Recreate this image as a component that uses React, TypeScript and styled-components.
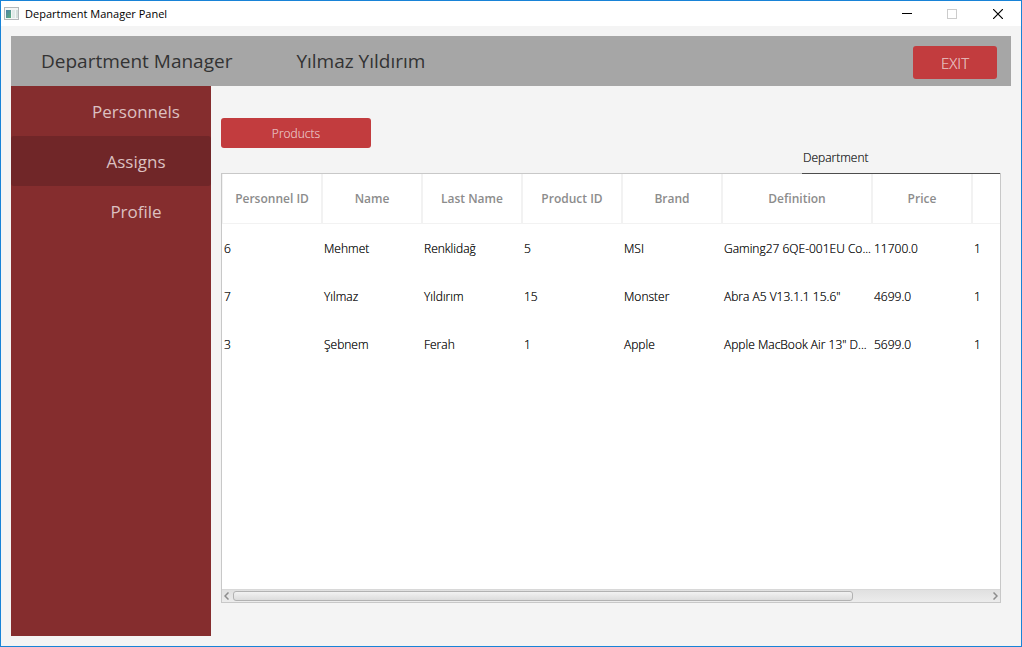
import React from "react";
import styled, { createGlobalStyle, css } from "styled-components";

const GlobalStyle = createGlobalStyle`
  *, *::before, *::after { box-sizing: border-box; }
  body { margin: 0; }
  body, button, input {
    font-family: "Open Sans", "Noto Sans", sans-serif;
    font-size: 12px;
  }
`;

/* Light cut with a second pass of ink, for a weight between light and regular. */
const bookWeight = css`
  font-weight: 300;
  text-shadow: 0 0 0 currentColor;
`;

const Window = styled.div`
  min-height: 100vh;
  display: flex;
  flex-direction: column;
  border: 1px solid #1883d7;
  background: #f4f4f4;
  color: #333;
`;

const TitleBar = styled.header`
  display: flex;
  align-items: center;
  height: 25px;
  padding-left: 3px;
  background: #fff;
  color: #000;
`;

const Title = styled.h1`
  flex: 1;
  margin: 0 0 0 5px;
  font-size: 11px;
  line-height: 16px;
  font-weight: 400;
`;

const WindowButton = styled.button`
  display: flex;
  align-items: center;
  justify-content: center;
  width: 46px;
  height: 25px;
  padding: 0;
  border: 0;
  background: transparent;
`;

const Body = styled.div`
  flex: 1;
  display: flex;
  flex-direction: column;
  padding: 10px;
`;

const Toolbar = styled.div`
  display: flex;
  align-items: flex-start;
  gap: 64px;
  height: 50px;
  padding: 10px 14px 0 30px;
  background: #a6a6a6;
  font-size: 19px;
  line-height: 30px;
`;

const ActionButton = styled.button<{ $large?: boolean }>`
  width: ${(p) => (p.$large ? 84 : 150)}px;
  height: ${(p) => (p.$large ? 33 : 30)}px;
  margin-left: ${(p) => (p.$large ? "auto" : 0)};
  padding: 0;
  border: 0;
  border-radius: 3px;
  background: #c23c3e;
  color: #e4b4b5;
  font-size: ${(p) => (p.$large ? 15 : 12)}px;
  ${bookWeight}
`;

const Columns = styled.div`
  flex: 1;
  display: flex;
`;

const Sidebar = styled.nav`
  flex: none;
  width: 200px;
  background: #852d2e;
`;

const NavButton = styled.button<{ $active?: boolean }>`
  display: block;
  width: 100%;
  height: 50px;
  padding: 2px 0 0 50px;
  border: 0;
  border-radius: 3px;
  background: ${(p) => (p.$active ? "#702628" : "transparent")};
  color: #dcc0c1;
  font-size: 17px;
  line-height: 24px;
  text-align: center;
`;

const Main = styled.main`
  flex: 1;
  min-width: 0;
  display: flex;
  flex-direction: column;
  align-items: flex-start;
  padding: 32px 10px 33px;
`;

const DepartmentField = styled.input`
  position: relative;
  z-index: 1;
  align-self: flex-end;
  width: 198px;
  height: 26px;
  margin: 0 1px -1px 0;
  padding: 0 1px 6px;
  border: 0;
  border-bottom: 1px solid #4d4d4d;
  border-radius: 0;
  background: transparent;
  color: #333;
  outline: 0;
  ${bookWeight}

  &::placeholder {
    color: #333;
    opacity: 1;
  }
`;

const TableFrame = styled.div`
  flex: 1;
  display: flex;
  flex-direction: column;
  align-self: stretch;
  border: 1px solid #c8c8c8;
  background: #fff;
`;

const TableViewport = styled.div`
  flex: 1;
  overflow: hidden;
`;

const Table = styled.table`
  width: 950px;
  table-layout: fixed;
  border-collapse: separate;
  border-spacing: 0;
`;

const HeadCell = styled.th<{ $width: number }>`
  width: ${(p) => p.$width}px;
  height: 50px;
  padding: 0;
  border: solid #f2f2f2;
  border-width: 0 1px 1px;
  color: #8c8c8c;
  font-weight: 600;
`;

const Cell = styled.td`
  height: 48px;
  padding: 0 0 0 2px;
  color: #222;
  white-space: nowrap;
  ${bookWeight}
`;

const ScrollBar = styled.div`
  display: flex;
  align-items: center;
  height: 13px;
  border-top: 1px solid #d8d8d8;
  background: linear-gradient(#e0e0e0, #ececec);
`;

const ScrollButton = styled.button<{ $side: "start" | "end" }>`
  display: flex;
  align-items: center;
  justify-content: flex-${(p) => p.$side};
  width: 11px;
  height: 12px;
  padding: 0 2px;
  border: 0;
  background: transparent;
`;

const ScrollTrack = styled.div`
  flex: 1;
`;

const ScrollThumb = styled.div`
  width: 82%;
  height: 10px;
  border: 1px solid #b2b2b2;
  border-radius: 3px;
  background: linear-gradient(#f2f2f2, #dcdcdc);
`;

const columns = [
  { label: "Personnel ID", width: 100 },
  { label: "Name", width: 100 },
  { label: "Last Name", width: 100 },
  { label: "Product ID", width: 100 },
  { label: "Brand", width: 100 },
  { label: "Definition", width: 150 },
  { label: "Price", width: 100 },
  { label: "", width: 200 },
];

const rows = [
  ["6", "Mehmet", "Renklidağ", "5", "MSI", "Gaming27 6QE-001EU Co...", "11700.0", "1"],
  ["7", "Yılmaz", "Yıldırım", "15", "Monster", 'Abra A5 V13.1.1 15.6"', "4699.0", "1"],
  ["3", "Şebnem", "Ferah", "1", "Apple", 'Apple MacBook Air 13" D...', "5699.0", "1"],
];

const AppIcon = () => (
  <svg width="16" height="14" viewBox="0 0 16 14" aria-hidden="true">
    <defs>
      <linearGradient id="pane" x1="0" y1="0" x2="1" y2="1">
        <stop offset="0" stopColor="#4f80a8" />
        <stop offset="1" stopColor="#5cae7c" />
      </linearGradient>
    </defs>
    <rect x="0.5" y="0.5" width="14" height="12" fill="#f4f6f6" stroke="#b4b8ba" />
    <rect x="2" y="3" width="5" height="8" fill="url(#pane)" />
    <rect x="8" y="3" width="3" height="8" fill="#dfeae8" />
    <rect x="12" y="3" width="2" height="8" fill="#d4e0dd" />
  </svg>
);

const ScrollArrow = ({ d }: { d: string }) => (
  <svg width="5" height="8" viewBox="0 0 5 8" aria-hidden="true">
    <path d={d} fill="none" stroke="#8c8c8c" strokeWidth="1.5" />
  </svg>
);

export default function App() {
  return (
    <>
      <GlobalStyle />
      <Window>
        <TitleBar>
          <AppIcon />
          <Title>Department Manager Panel</Title>
          <WindowButton aria-label="Minimize">
            <svg width="12" height="11" aria-hidden="true">
              <path d="M2 5.5H12" stroke="#000" />
            </svg>
          </WindowButton>
          <WindowButton aria-label="Maximize" disabled>
            <svg width="10" height="10" aria-hidden="true">
              <rect x="0.5" y="0.5" width="9" height="9" fill="none" stroke="#ccc" />
            </svg>
          </WindowButton>
          <WindowButton aria-label="Close">
            <svg width="10" height="10" aria-hidden="true">
              <path d="M0 0L10 10M10 0L0 10" stroke="#000" strokeWidth="1.2" />
            </svg>
          </WindowButton>
        </TitleBar>
        <Body>
          <Toolbar>
            <span>Department Manager</span>
            <span>Yılmaz Yıldırım</span>
            <ActionButton $large>EXIT</ActionButton>
          </Toolbar>
          <Columns>
            <Sidebar>
              <NavButton>Personnels</NavButton>
              <NavButton $active aria-current="page">Assigns</NavButton>
              <NavButton>Profile</NavButton>
            </Sidebar>
            <Main>
              <ActionButton>Products</ActionButton>
              <DepartmentField aria-label="Department" placeholder="Department" />
              <TableFrame>
                <TableViewport>
                  <Table>
                    <thead>
                      <tr>
                        {columns.map((c) => (
                          <HeadCell key={c.label} $width={c.width} scope="col">{c.label}</HeadCell>
                        ))}
                      </tr>
                    </thead>
                    <tbody>
                      {rows.map((row) => (
                        <tr key={row[0]}>
                          {row.map((value, i) => (
                            <Cell key={i}>{value}</Cell>
                          ))}
                        </tr>
                      ))}
                    </tbody>
                  </Table>
                </TableViewport>
                <ScrollBar>
                  <ScrollButton $side="start" aria-label="Scroll left">
                    <ScrollArrow d="M4.5 0.5L1 4L4.5 7.5" />
                  </ScrollButton>
                  <ScrollTrack>
                    <ScrollThumb />
                  </ScrollTrack>
                  <ScrollButton $side="end" aria-label="Scroll right">
                    <ScrollArrow d="M0.5 0.5L4 4L0.5 7.5" />
                  </ScrollButton>
                </ScrollBar>
              </TableFrame>
            </Main>
          </Columns>
        </Body>
      </Window>
    </>
  );
}
